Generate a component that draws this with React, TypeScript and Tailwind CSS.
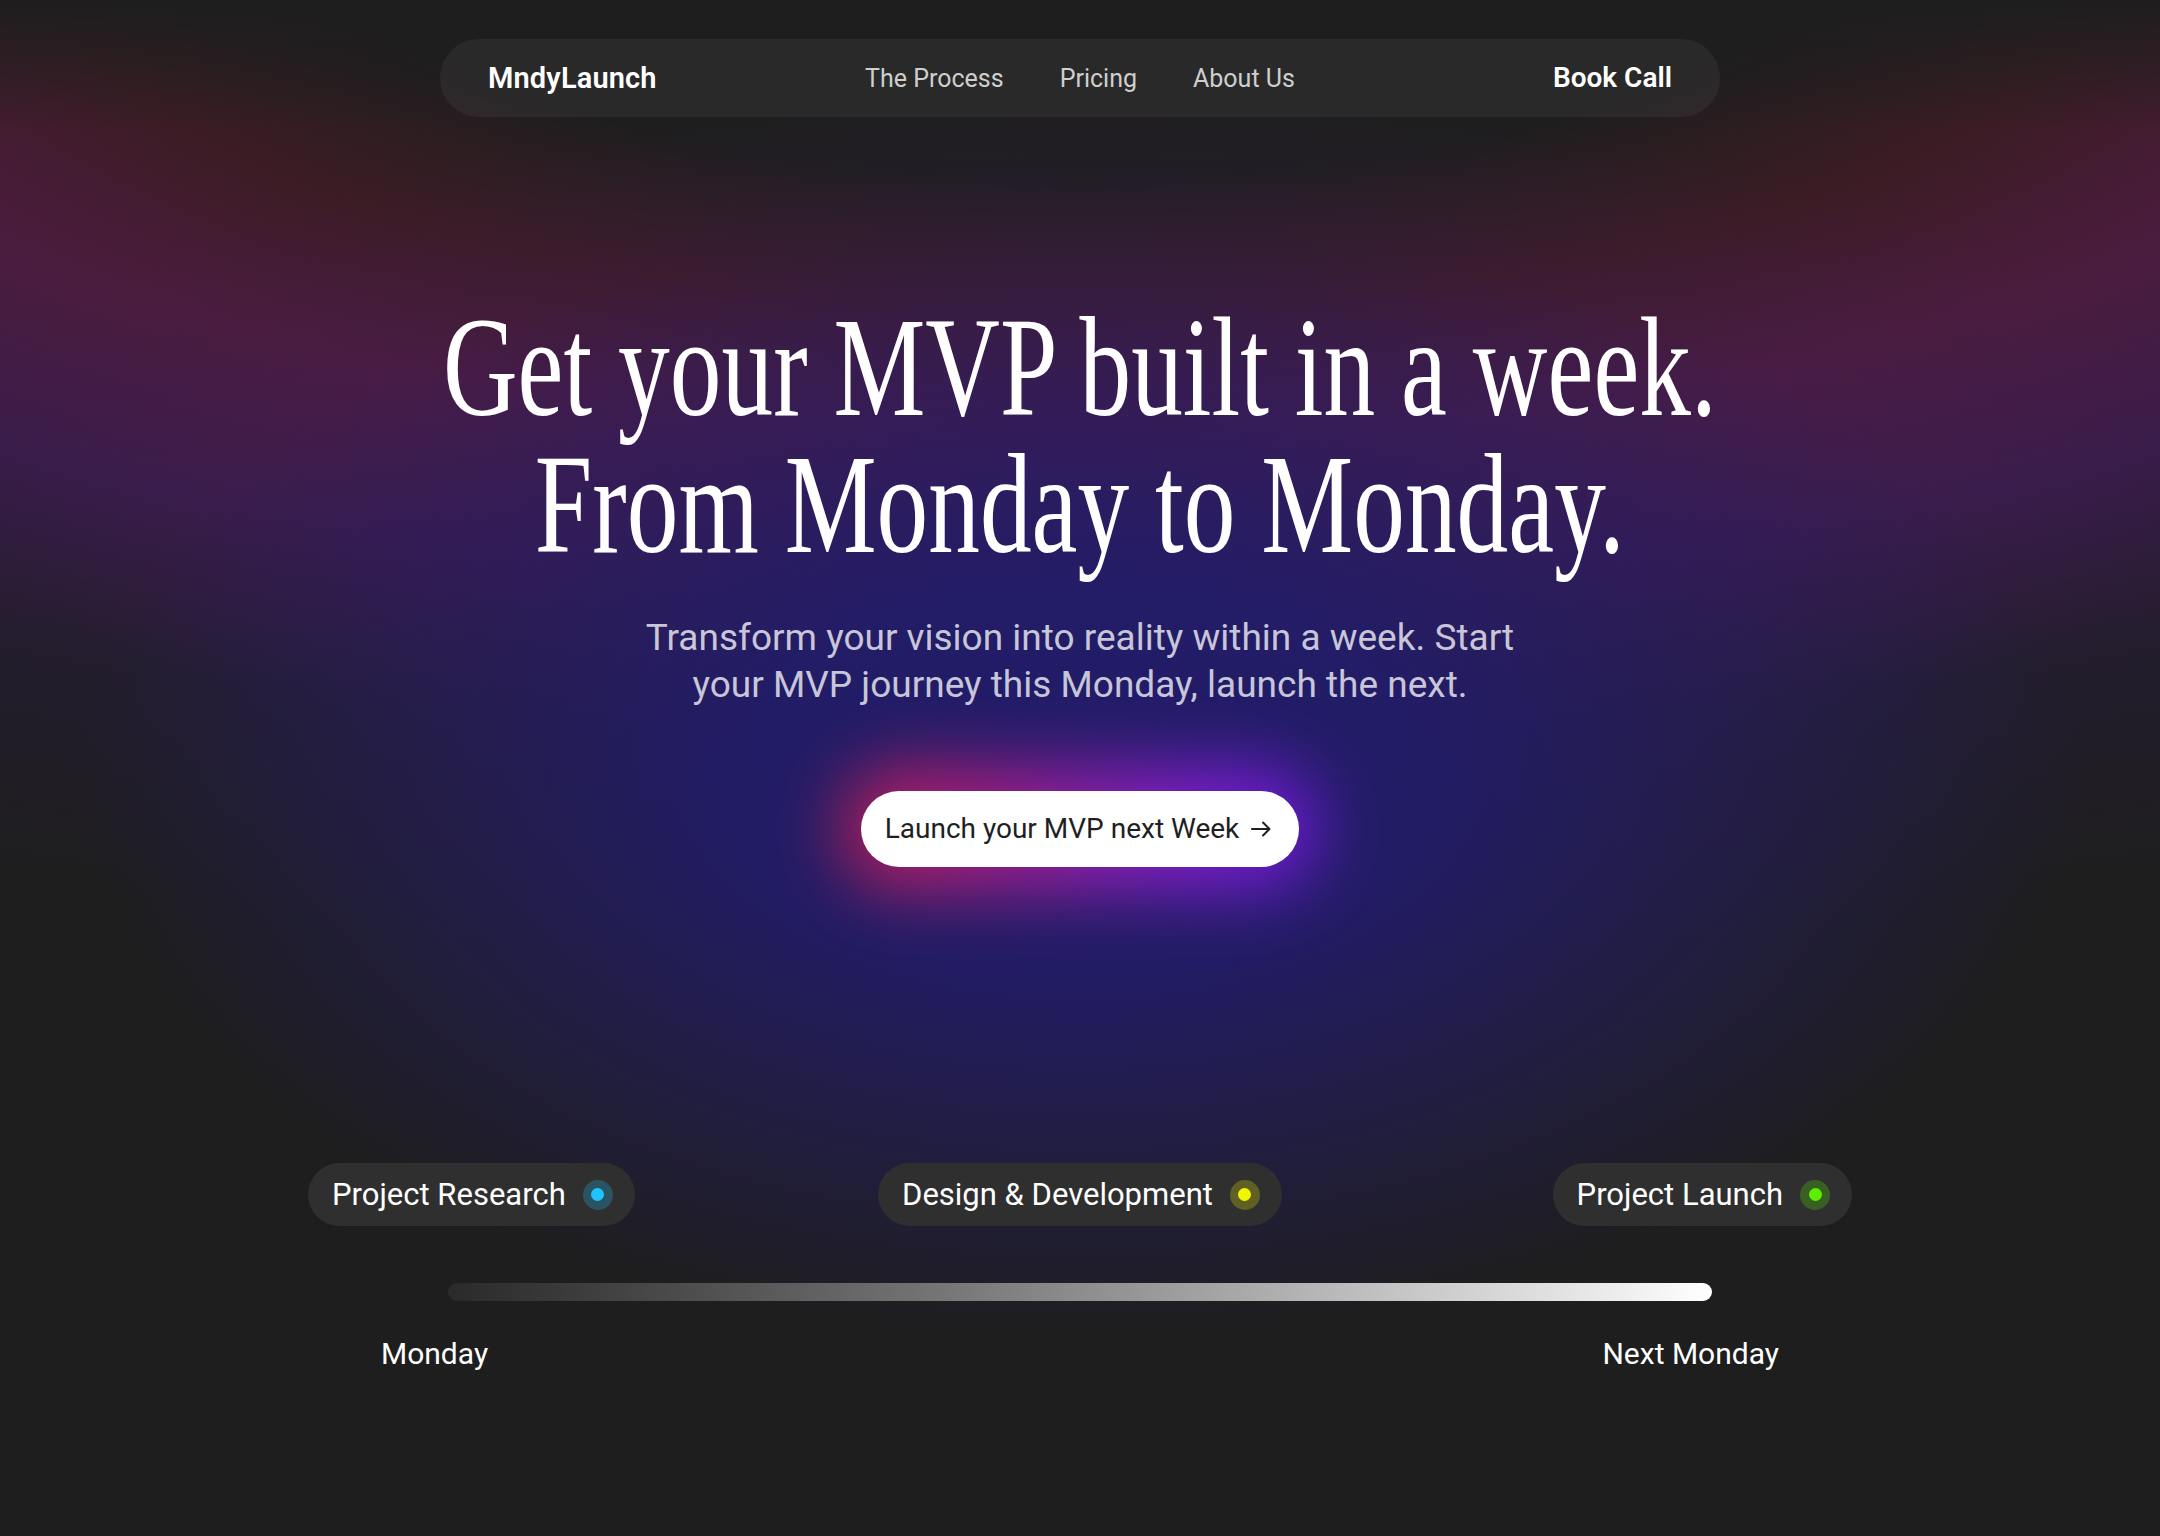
import { ReactNode } from "react";

const stages = [
  { label: "Project Research", ring: "bg-[#1ec3ff]/25", dot: "bg-[#1ec3ff]", place: "justify-self-start" },
  { label: "Design & Development", ring: "bg-[#f2f500]/25", dot: "bg-[#f2f500]", place: "justify-self-center" },
  { label: "Project Launch", ring: "bg-[#5cf000]/25", dot: "bg-[#5cf000]", place: "justify-self-end" }
];

function NavLink({ children }: { children: ReactNode }) {
  return (
    <a href="#" className="text-[25px] leading-none text-[#cfcfcf]">
      {children}
    </a>
  );
}

function StagePill({ label, ring, dot, place }: { label: string; ring: string; dot: string; place: string }) {
  return (
    <div className={`flex h-[63px] items-center gap-[17px] rounded-full bg-[#2f2f2f] pl-6 pr-[22px] ${place}`}>
      <span className="text-[31px] leading-none text-white">{label}</span>
      <span className={`flex h-[30px] w-[30px] items-center justify-center rounded-full ${ring}`}>
        <span className={`h-[13px] w-[13px] rounded-full ${dot}`} />
      </span>
    </div>
  );
}

export default function App() {
  return (
    <div className="min-h-[1536px] w-full bg-[#1e1e1e] bg-[image:linear-gradient(to_bottom,#1e1e1e_0px,rgba(30,30,30,0)_130px),radial-gradient(ellipse_1000px_560px_at_50%_780px,rgba(33,28,106,1)_0%,rgba(34,28,104,0.95)_35%,rgba(36,28,100,0.6)_60%,rgba(36,28,100,0)_100%),radial-gradient(ellipse_1100px_380px_at_50%_470px,rgba(62,28,92,0.55)_0%,rgba(62,28,92,0.3)_50%,rgba(62,28,92,0)_100%),radial-gradient(ellipse_1500px_580px_at_50%_-110px,#1e1e1e_0%,#1e1e1e_50%,#3c1c24_72%,#4b1c3e_94%,#3a1c4a_120%,rgba(40,28,60,0.5)_148%,rgba(30,30,30,0)_185%)] font-['Roboto',sans-serif] text-white">
      <div className="flex flex-col items-center pt-[39px]">
        <nav className="grid h-[78px] w-[1280px] grid-cols-[1fr_auto_1fr] items-center rounded-full bg-white/[0.05] px-12">
          <span className="text-[29px] font-semibold leading-none tracking-[0.005em]">MndyLaunch</span>
          <div className="flex items-center gap-14">
            <NavLink>The Process</NavLink>
            <NavLink>Pricing</NavLink>
            <NavLink>About Us</NavLink>
          </div>
          <a href="#" className="justify-self-end text-[28px] font-semibold leading-none">
            Book Call
          </a>
        </nav>

        <h1 className="mt-[182px] scale-x-[0.728] whitespace-nowrap text-center font-['Liberation_Serif',serif] text-[142px] font-normal leading-[137px] text-white">
          Get your MVP built in a week.
          <br />
          From Monday to Monday.
        </h1>

        <p className="mt-[41px] max-w-[890px] text-center text-[37px] leading-[47px] text-white/75">
          Transform your vision into reality within a week. Start your MVP journey this Monday, launch the next.
        </p>

        <div className="relative mt-[83px]">
          <div className="absolute -inset-x-5 -inset-y-6 rounded-full bg-[linear-gradient(100deg,#c8204a_0%,#a81f8c_35%,#8c1fc8_65%,#6c1ae2_100%)] opacity-95 blur-[34px]" />
          <button className="relative flex h-[76px] items-center gap-3 rounded-full bg-white pl-6 pr-7 text-[28px] leading-none text-[#1f1f1f]">
            Launch your MVP next Week
            <svg width="20" height="16" viewBox="0 0 20 16" fill="none" stroke="currentColor" strokeWidth="2" strokeLinecap="round" strokeLinejoin="round">
              <path d="M1 8h17" />
              <path d="M12 1.5 18.5 8 12 14.5" />
            </svg>
          </button>
        </div>

        <div className="mt-[296px] grid w-[1544px] grid-cols-3 items-center">
          {stages.map((s) => (
            <StagePill key={s.label} {...s} />
          ))}
        </div>

        <div className="mt-[57px] h-[18px] w-[1264px] rounded-full bg-gradient-to-r from-[#2a2a2a] to-white" />

        <div className="mt-[35px] flex w-[1398px] justify-between text-[30px] leading-9 text-white">
          <span>Monday</span>
          <span>Next Monday</span>
        </div>
      </div>
    </div>
  );
}
